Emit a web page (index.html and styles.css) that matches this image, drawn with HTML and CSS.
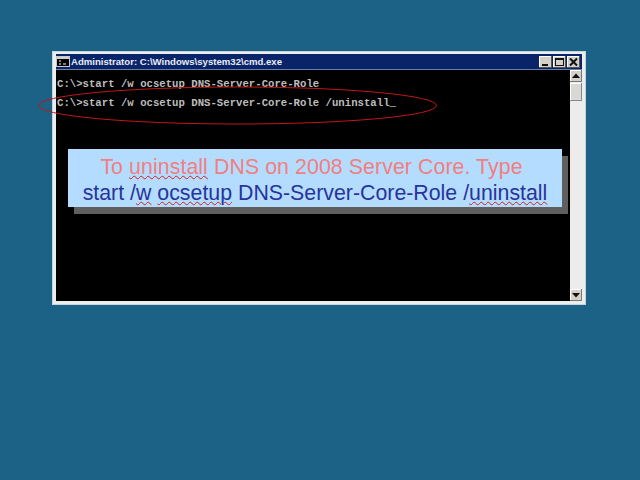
FILE: index.html
```html
<!DOCTYPE html>
<html lang="en">
<head>
<meta charset="utf-8">
<title>cmd.exe</title>
<link rel="stylesheet" href="styles.css">
</head>
<body>
<div class="window">
  <div class="titlebar">
    <svg class="app-icon" width="14" height="11" viewBox="0 0 14 11"><rect x="0.5" y="0.5" width="13" height="10" fill="#000" stroke="#c8c8c8"/><rect x="1" y="1" width="12" height="2" fill="#d0d0d0"/><path d="M3 5h2M3 8h2M7 8h3" stroke="#fff" stroke-width="1"/></svg>
    <span class="title">Administrator: C:\Windows\system32\cmd.exe</span>
    <div class="controls">
      <span class="ctl"><svg width="13" height="12" viewBox="0 0 13 12"><rect x="3" y="8" width="6" height="2" fill="#111"/></svg></span>
      <span class="ctl"><svg width="13" height="12" viewBox="0 0 13 12"><rect x="2.5" y="2.5" width="8" height="7" fill="none" stroke="#111"/><rect x="2" y="2" width="9" height="2" fill="#111"/></svg></span>
      <span class="ctl"><svg width="13" height="12" viewBox="0 0 13 12"><path d="M3 2.5l7 7M10 2.5l-7 7" stroke="#111" stroke-width="2" fill="none"/></svg></span>
    </div>
  </div>
  <div class="body">
    <div class="console">
      <div class="line">C:\&gt;start /w ocsetup DNS-Server-Core-Role</div>
      <div class="line">C:\&gt;start /w ocsetup DNS-Server-Core-Role /uninstall<span class="cursor">_</span></div>
    </div>
    <div class="scrollbar">
      <span class="arrow"><svg width="12" height="12" viewBox="0 0 12 12"><path d="M6 3.5L10 8H2z" fill="#111"/></svg></span>
      <span class="thumb"></span>
      <span class="track"></span>
      <span class="arrow"><svg width="12" height="12" viewBox="0 0 12 12"><path d="M6 8.5L10 4H2z" fill="#111"/></svg></span>
    </div>
  </div>
  <div class="callout">
    <p class="pink">To <span class="sq">uninstall</span> DNS on 2008 Server Core. Type</p>
    <p class="navy">start /<span class="sq">w</span> <span class="sq">ocsetup</span> DNS-Server-Core-Role /<span class="sq">uninstall</span></p>
  </div>
  <svg class="ring" width="420" height="50" viewBox="0 0 420 50"><ellipse cx="209.5" cy="21.5" rx="199" ry="18.5" fill="none" stroke="#c01818" stroke-width="1"/></svg>
</div>
</body>
</html>
```
FILE: styles.css
```css
* { box-sizing: border-box; }
html, body { margin: 0; height: 100%; }
body {
  background: #1b6286;
  padding: 51px 54px 0 52px;
  overflow: hidden;
}
.window {
  position: relative;
  width: 534px;
  height: 254px;
  background: #eceeee;
  border: 1px solid #c9d4da;
  padding: 2px 3px 3px 3px;
  display: flex;
  flex-direction: column;
}
.titlebar {
  height: 16px;
  background: #0a246a;
  display: flex;
  align-items: center;
  padding: 0 2px 0 0;
  gap: 1px;
  border-bottom: 1px solid #6a80a8;
}
.title {
  font: bold 9.6px/14px "Liberation Sans", sans-serif;
  color: #e8ecf4;
  flex: 1;
  white-space: nowrap;
}
.controls { display: flex; gap: 1px; }
.ctl {
  width: 13px;
  height: 12px;
  background: #d4d0c8;
  display: block;
  box-shadow: inset -1px -1px 0 #555, inset 1px 1px 0 #fff;
}
.ctl svg, .arrow svg { display: block; }
.body { flex: 1; display: flex; min-height: 0; }
.console {
  flex: 1;
  background: #000;
  padding: 5px 0 0 1px;
  font: bold 10.667px/19px "Liberation Mono", monospace;
  color: #bdbdbd;
}
.line { white-space: pre; }
.cursor { color: #e0e0e0; }
.scrollbar {
  width: 12px;
  display: flex;
  flex-direction: column;
  background: #ececec;
}
.arrow {
  height: 12px;
  background: #d4d0c8;
  box-shadow: inset -1px -1px 0 #777, inset 1px 1px 0 #fff;
  display: block;
}
.thumb {
  height: 18px;
  margin-top: 1px;
  background: #d8d8d4;
  box-shadow: inset -1px -1px 0 #888, inset 1px 1px 0 #fff;
}
.track { flex: 1; }
.callout {
  position: absolute;
  left: 15px;
  top: 97px;
  width: 494px;
  height: 58px;
  background: #b4dcff;
  box-shadow: 6px 7px 0 #5f5f5f;
  padding-top: 5px;
  text-align: center;
  font: 21.33px/26px "Liberation Sans", sans-serif;
}
.callout p { margin: 0; white-space: nowrap; }
.pink { color: #f27f7f; letter-spacing: 0.07px; padding-right: 7px; }
.navy { color: #27349b; }
.sq {
  text-decoration: underline wavy #d02020 1px;
  text-underline-offset: 1px;
}
.ring {
  position: absolute;
  left: -25px;
  top: 32px;
  overflow: visible;
}
```
